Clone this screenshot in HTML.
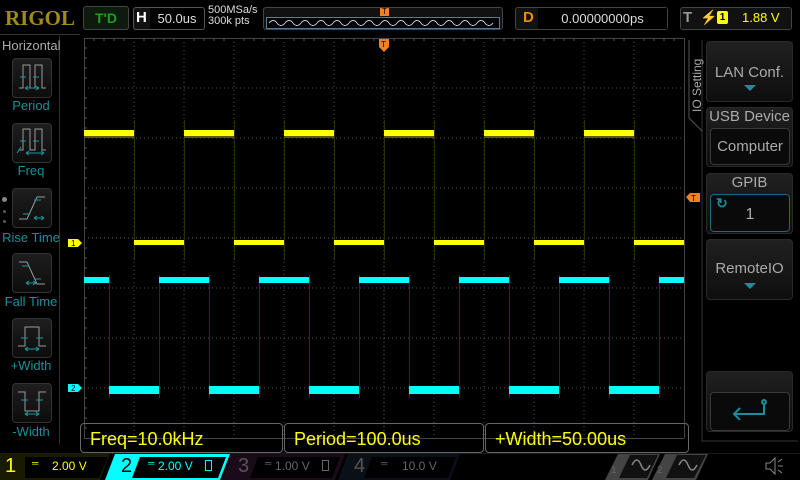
<!DOCTYPE html>
<html><head><meta charset="utf-8"><style>
*{margin:0;padding:0;box-sizing:border-box}
body{width:800px;height:480px;background:#000;overflow:hidden;position:relative;font-family:"Liberation Sans",sans-serif;color:#ddd}
.a{position:absolute}
.btn{position:absolute;border:1px solid #333;border-radius:4px;background:linear-gradient(#1e1e1e,#0c0c0c)}
.lbl{position:absolute;color:#1a8f99;font-size:13px;text-align:center;width:84px;left:0}
.rb{position:absolute;left:706px;width:87px;border:1px solid #2a2a2a;border-radius:4px;background:linear-gradient(#202020,#0e0e0e);color:#aaa;text-align:center;font-size:15px}
.inner{position:absolute;left:3px;width:80px;border:1px solid #3a3a3a;border-radius:4px;background:#0a0a0a}
.mb{position:absolute;top:423px;height:30px;border:1px solid #666;border-radius:4px;color:#ffff00;font-size:18px;padding:5px 0 0 9px}
</style></head><body>
<!-- top bar -->
<div class="a" style="left:5px;top:6px;font-family:'Liberation Serif',serif;font-weight:bold;font-size:21px;color:#a08a18">RIGOL</div>
<div class="a" style="left:83px;top:6px;width:46px;height:24px;border:1px solid #444;border-radius:3px;background:#0e1a0e;color:#1aa01a;font-weight:bold;font-size:14px;text-align:center;line-height:22px">T'D</div>
<div class="a" style="left:133px;top:7px;width:72px;height:23px;border:1px solid #555;border-radius:3px;background:#111"></div>
<div class="a" style="left:136px;top:9px;color:#fff;font-weight:bold;font-size:15px">H</div>
<div class="a" style="left:150px;top:8px;width:54px;height:21px;background:#000;border-radius:2px;color:#ddd;font-size:13px;line-height:21px;text-align:center">50.0us</div>
<div class="a" style="left:208px;top:5px;color:#ddd;font-size:11px;line-height:11px">500MSa/s<br>300k pts</div>
<div class="a" style="left:263px;top:7px;width:240px;height:23px;border:1px solid #444;border-radius:3px;background:#111"></div>
<svg class="a" style="left:266px;top:17px" width="234" height="12"><rect x="0.5" y="0.5" width="233" height="11" fill="#000" stroke="#5a7a9a"/><path d="M3 6 q4 -5 8 0 t8 0 t8 0 t8 0 t8 0 t8 0 t8 0 t8 0 t8 0 t8 0 t8 0 t8 0 t8 0 t8 0 t8 0 t8 0 t8 0 t8 0 t8 0 t8 0 t8 0 t8 0 t8 0 t8 0 t8 0 t8 0 t8 0 t8 0" fill="none" stroke="#ccc" stroke-width="1"/></svg>
<div class="a" style="left:380px;top:8px;width:9px;height:8px;background:#f08020;color:#000;font-size:8px;text-align:center;line-height:8px">T</div>
<div class="a" style="left:515px;top:7px;width:153px;height:23px;border:1px solid #444;border-radius:3px;background:#111"></div>
<div class="a" style="left:523px;top:9px;color:#f08a10;font-weight:bold;font-size:15px">D</div>
<div class="a" style="left:538px;top:8px;width:129px;height:21px;background:#000;color:#ddd;font-size:13px;line-height:21px;text-align:center">0.00000000ps</div>
<div class="a" style="left:680px;top:7px;width:112px;height:23px;border:1px solid #444;border-radius:3px;background:#111"></div>
<div class="a" style="left:683px;top:9px;color:#999;font-weight:bold;font-size:15px">T</div>
<div class="a" style="left:700px;top:9px;color:#ff0;font-size:14px">⚡</div>
<div class="a" style="left:717px;top:11px;width:11px;height:13px;background:#ff0;border-radius:2px;color:#000;font-size:10px;text-align:center;line-height:13px;font-weight:bold">1</div>
<div class="a" style="left:742px;top:10px;color:#ff0;font-size:13px">1.88 V</div>
<div class="a" style="left:0;top:34px;width:80px;height:1px;background:#333"></div>
<!-- left panel -->
<div class="a" style="left:0;top:36px;width:60px;height:408px;border-right:1px solid #333"></div>
<div class="a" style="left:2px;top:38px;color:#aaa;font-size:13px">Horizontal</div>
<div class="btn" style="left:12px;top:58px;width:40px;height:40px"></div>
<div class="btn" style="left:12px;top:123px;width:40px;height:40px"></div>
<div class="btn" style="left:12px;top:188px;width:40px;height:40px"></div>
<div class="btn" style="left:12px;top:253px;width:40px;height:40px"></div>
<div class="btn" style="left:12px;top:318px;width:40px;height:40px"></div>
<div class="btn" style="left:12px;top:383px;width:40px;height:40px"></div>
<svg class="a" style="left:12px;top:58px" width="40" height="370" fill="none" stroke-width="1">
<g stroke="#999"><path d="M7 30h4V7h7v23h5V7h7v23h4"/></g><g stroke="#1a9aa0"><path d="M8 19h6M21 19h6M13 30h14M13 30l3-2M13 30l3 2M27 30l-3-2M27 30l-3 2"/></g>
<g transform="translate(0,65)"><g stroke="#999"><path d="M7 27h4V6h7v21h5V6h7v21h4"/></g><g stroke="#1a9aa0"><path d="M8 18h6M21 18h6M14 30h18M14 30l3-2M14 30l3 2M32 30l-3-2M32 30l-3 2M5 30l4-6"/></g></g>
<g transform="translate(0,130)"><g stroke="#999"><path d="M7 31h8l10-22h8"/></g><g stroke="#1a9aa0"><path d="M11 26h7M22 12h7M22 30h10M22 30l3-2M22 30l3 2M32 30l-3-2M32 30l-3 2"/></g></g>
<g transform="translate(0,195)"><g stroke="#999"><path d="M7 9h8l10 22h8"/></g><g stroke="#1a9aa0"><path d="M10 13h7M22 26h7M14 30h10M14 30l3-2M14 30l3 2M24 30l-3-2M24 30l-3 2"/></g></g>
<g transform="translate(0,260)"><g stroke="#999"><path d="M6 28h7V9h14v19h7"/></g><g stroke="#1a9aa0"><path d="M9 20h7M24 20h7M13 31h14M13 31l3-2M13 31l3 2M27 31l-3-2M27 31l-3 2"/></g></g>
<g transform="translate(0,325)"><g stroke="#999"><path d="M6 9h7v19h14V9h7"/></g><g stroke="#1a9aa0"><path d="M9 17h7M24 17h7M13 31h14M13 31l3-2M13 31l3 2M27 31l-3-2M27 31l-3 2"/></g></g>
</svg>
<div class="lbl" style="top:98px;width:62px">Period</div>
<div class="lbl" style="top:163px;width:62px">Freq</div>
<div class="lbl" style="top:230px;width:62px">Rise Time</div>
<div class="lbl" style="top:294px;width:62px">Fall Time</div>
<div class="lbl" style="top:358px;width:62px">+Width</div>
<div class="lbl" style="top:424px;width:62px">-Width</div>
<div class="a" style="left:2px;top:197px;width:5px;height:5px;border-radius:50%;background:#888"></div>
<div class="a" style="left:3px;top:210px;width:3px;height:3px;border-radius:50%;background:#555"></div>
<div class="a" style="left:3px;top:220px;width:3px;height:3px;border-radius:50%;background:#555"></div>
<!-- plot -->
<svg class="a" style="left:0;top:0" width="800" height="480">
<g stroke="#555" stroke-width="1" stroke-dasharray="1 3">
<path d="M134 38V438M184 38V438M234 38V438M284 38V438M334 38V438M434 38V438M484 38V438M534 38V438M584 38V438M634 38V438"/>
<path d="M84 88H684M84 138H684M84 188H684M84 288H684M84 338H684M84 388H684"/>
<path d="M384 38V438M84 238H684" stroke="#666"/>
</g>
<path d="M84.5 38V438M84.5 38.5H684M684.5 38V438M84 438.5H684" stroke="#444" fill="none"/>
<g stroke="#555"><path d="M84 48h3M84 58h3M84 68h3M84 78h3M84 98h3M84 108h3M84 118h3M84 128h3M84 148h3M84 158h3M84 168h3M84 178h3M84 198h3M84 208h3M84 218h3M84 228h3M84 248h3M84 258h3M84 268h3M84 278h3M84 298h3M84 308h3M84 318h3M84 328h3M84 348h3M84 358h3M84 368h3M84 378h3M84 398h3M84 408h3M84 418h3M84 428h3"/>
<path d="M94 38v3M104 38v3M114 38v3M124 38v3M144 38v3M154 38v3M164 38v3M174 38v3M194 38v3M204 38v3M214 38v3M224 38v3M244 38v3M254 38v3M264 38v3M274 38v3M294 38v3M304 38v3M314 38v3M324 38v3M344 38v3M354 38v3M364 38v3M374 38v3M394 38v3M404 38v3M414 38v3M424 38v3M444 38v3M454 38v3M464 38v3M474 38v3M494 38v3M504 38v3M514 38v3M524 38v3M544 38v3M554 38v3M564 38v3M574 38v3M594 38v3M604 38v3M614 38v3M624 38v3M644 38v3M654 38v3M664 38v3M674 38v3"/>
</g>
<g stroke="#2e2e00" stroke-width="1"><path d="M134.5 120V260M184.5 120V260M234.5 120V260M284.5 120V260M334.5 120V260M384.5 120V260M434.5 120V260M484.5 120V260M534.5 120V260M584.5 120V260M634.5 120V260"/></g>
<g fill="#ffff00">
<rect x="84" y="130" width="50" height="6"/><rect x="184" y="130" width="50" height="6"/><rect x="284" y="130" width="50" height="6"/><rect x="384" y="130" width="50" height="6"/><rect x="484" y="130" width="50" height="6"/><rect x="584" y="130" width="50" height="6"/>
<rect x="134" y="240" width="50" height="5"/><rect x="234" y="240" width="50" height="5"/><rect x="334" y="240" width="50" height="5"/><rect x="434" y="240" width="50" height="5"/><rect x="534" y="240" width="50" height="5"/><rect x="634" y="240" width="50" height="5"/>
</g>
<g fill="#5a5a00">
<rect x="84" y="136" width="50" height="2"/><rect x="184" y="136" width="50" height="2"/><rect x="284" y="136" width="50" height="2"/><rect x="384" y="136" width="50" height="2"/><rect x="484" y="136" width="50" height="2"/><rect x="584" y="136" width="50" height="2"/></g>
<g stroke="#063838" stroke-width="1"><path d="M109.5 275V398M159.5 275V398M209.5 275V398M259.5 275V398M309.5 275V398M359.5 275V398M409.5 275V398M459.5 275V398M509.5 275V398M559.5 275V398M609.5 275V398M659.5 275V398"/></g>
<g fill="#00ffff">
<rect x="84" y="277" width="25" height="6"/><rect x="159" y="277" width="50" height="6"/><rect x="259" y="277" width="50" height="6"/><rect x="359" y="277" width="50" height="6"/><rect x="459" y="277" width="50" height="6"/><rect x="559" y="277" width="50" height="6"/><rect x="659" y="277" width="25" height="6"/>
<rect x="109" y="386" width="50" height="8"/><rect x="209" y="386" width="50" height="8"/><rect x="309" y="386" width="50" height="8"/><rect x="409" y="386" width="50" height="8"/><rect x="509" y="386" width="50" height="8"/><rect x="609" y="386" width="50" height="8"/>
</g>
<path d="M68 239h10l4 4-4 4h-10z" fill="#ffff00"/><text x="71" y="246" font-size="8" font-family="Liberation Sans" fill="#000">1</text>
<path d="M68 384h10l4 4-4 4h-10z" fill="#00ffff"/><text x="71" y="391" font-size="8" font-family="Liberation Sans" fill="#000">2</text>
<path d="M379 39h10v8l-5 5-5-5z" fill="#f08020"/><text x="381" y="47" font-size="8" font-family="Liberation Sans" fill="#000">T</text>
<path d="M686 197l4-4h10v9h-10z" fill="#f08020"/><text x="691" y="201" font-size="8" font-family="Liberation Sans" fill="#000">T</text>
</svg>
<!-- right panel -->
<svg class="a" style="left:686px;top:38px" width="114" height="406" fill="none"><path d="M16 2V403H112" stroke="#333"/><path d="M3 2V80l13 13" stroke="#555"/></svg>
<div class="a" style="left:690px;top:112px;transform:rotate(-90deg);transform-origin:0 0;color:#aaa;font-size:12px;white-space:nowrap">IO Setting</div>
<div class="rb" style="top:41px;height:61px"><div style="margin-top:22px">LAN Conf.</div><div style="margin:4px auto 0;width:0;height:0;border:6px solid transparent;border-top:6px solid #1a8f99;border-bottom:none"></div></div>
<div class="rb" style="top:107px;height:60px"><div>USB Device</div><div class="inner" style="top:20px;height:37px;line-height:35px">Computer</div></div>
<div class="rb" style="top:173px;height:61px"><div>GPIB</div><div class="inner" style="top:20px;height:38px;border-color:#1a6a80;line-height:40px;font-size:16px">1<span style="position:absolute;left:5px;top:-12px;color:#1a8f99;font-size:14px;font-weight:bold">↻</span></div></div>
<div class="rb" style="top:239px;height:61px"><div style="margin-top:20px">RemoteIO</div><div style="margin:6px auto 0;width:0;height:0;border:6px solid transparent;border-top:6px solid #1a8f99;border-bottom:none"></div></div>
<div class="rb" style="top:371px;height:61px"><div class="inner" style="top:20px;height:39px"></div></div>
<svg class="a" style="left:728px;top:398px" width="44" height="22" fill="none" stroke="#1a8f99" stroke-width="2"><path d="M36 6V16H6M12 10l-6 6 6 6"/><circle cx="36" cy="4" r="2"/></svg>
<!-- measurements -->
<div class="mb" style="left:80px;width:203px">Freq=10.0kHz</div>
<div class="mb" style="left:284px;width:200px">Period=100.0us</div>
<div class="mb" style="left:485px;width:204px">+Width=50.00us</div>
<!-- bottom bar -->
<svg class="a" style="left:0;top:453px" width="800" height="27">
<path d="M0 0H800" stroke="#333"/>
<path d="M0 1H110L100 27H0z" fill="#1a1a00"/><path d="M25 4H108L99 25H25z" fill="#000"/>
<path d="M115 1H230L220 27H105z" fill="#00ffff"/><path d="M140 4H226L218 25H132z" fill="#000"/>
<path d="M232 1H345L335 27H222z" fill="#1a0a1a"/><path d="M258 4H340L332 25H250z" fill="#000"/>
<path d="M348 1H460L450 27H338z" fill="#0a1018"/><path d="M372 4H456L448 25H364z" fill="#000"/>
<path d="M618 1H660L648 27H605z" fill="#444"/><path d="M630 2H658L647 25H619z" fill="#111"/>
<path d="M665 1H708L696 27H652z" fill="#444"/><path d="M677 2H706L694 25H666z" fill="#111"/>
<path d="M632 12q5-10 9 0t9 0M679 12q5-10 9 0t9 0" stroke="#888" fill="none" stroke-width="1.5"/>
<path d="M766 10h4l5-5v16l-5-5h-4z" stroke="#888" fill="none"/><path d="M778 9l4-3M778 13h5M778 17l4 3" stroke="#888"/>
</svg>
<div class="a" style="left:5px;top:455px;color:#ff0;font-size:20px">1</div>
<div class="a" style="left:32px;top:458px;color:#ff0;font-size:9px">═</div>
<div class="a" style="left:52px;top:459px;color:#ff0;font-size:12px">2.00 V</div>
<div class="a" style="left:121px;top:455px;color:#000;font-size:20px">2</div>
<div class="a" style="left:148px;top:458px;color:#0ff;font-size:9px">═</div>
<div class="a" style="left:158px;top:459px;color:#0ff;font-size:12px">2.00 V</div>
<div class="a" style="left:205px;top:460px;width:7px;height:11px;border:1px solid #0ff"></div>
<div class="a" style="left:238px;top:455px;color:#555;font-size:20px">3</div>
<div class="a" style="left:265px;top:458px;color:#666;font-size:9px">═</div>
<div class="a" style="left:275px;top:459px;color:#666;font-size:12px">1.00 V</div>
<div class="a" style="left:322px;top:460px;width:7px;height:11px;border:1px solid #666"></div>
<div class="a" style="left:354px;top:455px;color:#555;font-size:20px">4</div>
<div class="a" style="left:381px;top:458px;color:#666;font-size:9px">═</div>
<div class="a" style="left:402px;top:459px;color:#666;font-size:12px">10.0 V</div>
<div class="a" style="left:611px;top:465px;color:#666;font-size:10px">1</div>
<div class="a" style="left:657px;top:465px;color:#666;font-size:10px">2</div>
</body></html>
